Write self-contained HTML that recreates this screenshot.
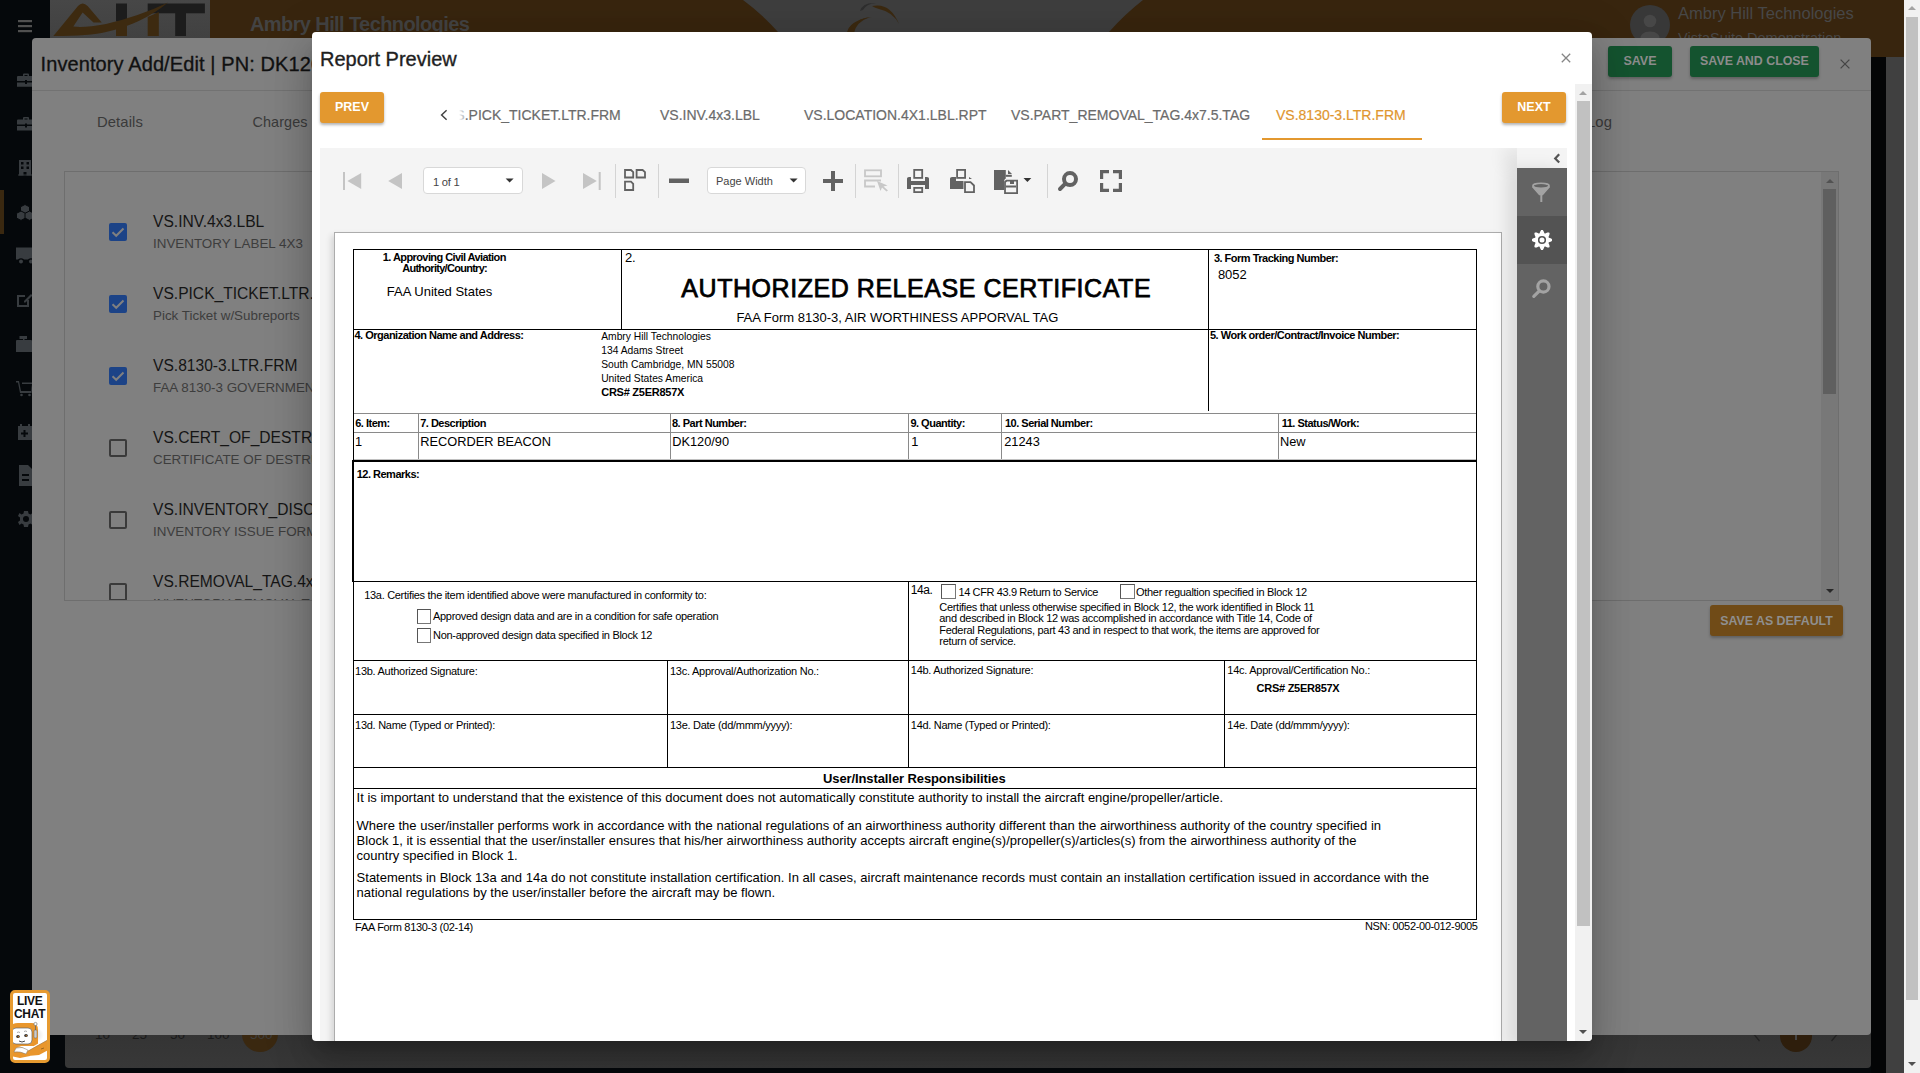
<!DOCTYPE html>
<html><head><meta charset="utf-8">
<style>
*{box-sizing:border-box;margin:0;padding:0}
html,body{width:1920px;height:1073px;overflow:hidden;background:#05080b;font-family:"Liberation Sans",sans-serif;position:relative}
.a{position:absolute}
.t{white-space:nowrap;line-height:1}
</style></head><body>
<!-- ===== PAGE LAYER (double darkened) ===== -->
<div class="a" style="left:50px;top:0;width:1854px;height:57px;background:#38250e"></div>
<!-- center header band -->
<svg class="a" style="left:700px;top:0" width="500" height="57" viewBox="0 0 500 57">
 <path d="M43 0H443Q425 14 409 32V57H78V32Q62 14 43 0Z" fill="#3e3e3e"/>
 <path d="M147 33Q152 20 172 17L165 18Q153 21 150 33Z" fill="#3b2910"/>
 <path d="M147 33Q149 21 170 17Q156 22 154 33Z" fill="#3b2910"/>
 <path d="M172 6Q190 2 199 24Q193 12 179 9Q175 8 172 6Z" fill="#3b2910"/>
 <path d="M160 11Q163 2 176 3Q166 4 163 10Z" fill="#2e2e2e"/>
</svg>
<!-- logo -->
<div class="a" style="left:50px;top:0;width:160px;height:37.5px;background:linear-gradient(#474747,#414141)"></div>
<svg class="a" style="left:50px;top:0" width="160" height="38" viewBox="0 0 160 38">
 <g fill="#1c1c1c">
  <rect x="66" y="3.5" width="11" height="18"/>
  <rect x="97.7" y="3.5" width="57.2" height="9.8"/>
  <rect x="125.2" y="13" width="10.8" height="23"/>
 </g>
 <g fill="#3d2a10">
  <path d="M3.4 36L28 6Q32.6 1 37.6 6L51.7 22.6H43.5L32.6 12.5L23.3 26.6Q35 28 56 24Q90 16 118 2.5Q92 24 56 32Q40 36 3.4 36Z"/>
  <rect x="66" y="26" width="11" height="10"/>
  <path d="M97.7 17L108.8 12V36H97.7Z"/>
 </g>
</svg>
<div class="a t" style="left:250px;top:14px;font-size:20px;font-weight:bold;letter-spacing:-.6px;color:#434343">Ambry Hill Technologies</div>
<!-- right header -->
<div class="a" style="left:1630px;top:5px;width:40px;height:40px;border-radius:50%;background:#383838"></div>
<svg class="a" style="left:1630px;top:5px" width="40" height="40" viewBox="0 0 40 40"><circle cx="20" cy="16" r="6.3" fill="#474747"/><path d="M10 35Q10 26.5 20 26.5Q30 26.5 30 35Z" fill="#474747"/></svg>
<div class="a t" style="left:1678px;top:4.5px;font-size:16.5px;color:#474747">Ambry Hill Technologies</div>
<div class="a t" style="left:1678px;top:31px;font-size:14.5px;color:#474747">VistaSuite Demonstration</div>
<!-- sidebar -->
<div class="a" style="left:0;top:190px;width:4px;height:44px;background:#3a2810"></div>
<svg class="a" style="left:0;top:0" width="50" height="540" viewBox="0 0 50 540">
 <g fill="#505050"><rect x="18" y="20" width="14" height="2.2"/><rect x="18" y="25" width="14" height="2.2"/><rect x="18" y="30" width="14" height="2.2"/></g>
 <g fill="#383c40">
  <path d="M17 77Q17 76 18 76H23V74.5Q23 73.5 24 73.5H28Q29 73.5 29 74.5V76H32V81H27V80H25V81H17ZM24.5 76H27.5V75H24.5ZM17 82.5H25V84H27V82.5H32V86.7H17Z"/>
  <path d="M17 120.5Q17 119.5 18 119.5H23V118Q23 117 24 117H28Q29 117 29 118V119.5H32V124.5H27V123.5H25V124.5H17ZM24.5 119.5H27.5V118.5H24.5ZM17 126H25V127.5H27V126H32V130.4H17Z"/>
  <path d="M19 160H31V175.5H26.5V172H23.5V175.5H19ZM21 162V164.5H23.5V162ZM26.5 162V164.5H29V162ZM21 166.5V169H23.5V166.5ZM26.5 166.5V169H29V166.5Z"/>
  <rect x="18" y="174.5" width="14" height="1"/>
  <g stroke="#05080b" stroke-width="1">
  <path d="M25 204.5L29.5 206.8V211.6L25 213.9L20.5 211.6V206.8Z"/>
  <path d="M21 211L25.5 213.3V218.1L21 220.4L16.5 218.1V213.3Z"/>
  <path d="M29.5 211L34 213.3V218.1L29.5 220.4L25 218.1V213.3Z"/>
  </g>
  <path d="M16 247.5H32V259.5H16Z"/>
  <circle cx="21" cy="261.5" r="2.6" stroke="#05080b" stroke-width="1.2"/><circle cx="31" cy="261.5" r="2.6" stroke="#05080b" stroke-width="1.2"/>
  <path d="M17 295H25V297H19V305H27V300H29V307H17Z"/><path d="M24 301L31 294L32.5 295.5L25.5 302.5H24Z"/>
  <path d="M19.5 336H27V339H24.5V340H31Q32 340 32 341V352H16V341Q16 340 17 340H23V339H19.5Z"/>
  <path d="M16 381H19L21 391H31L32 384H22V382.5H32.5L31.5 393H20L18 382.5H16Z"/><circle cx="21.5" cy="395" r="1.3"/><circle cx="29.5" cy="395" r="1.3"/>
  <path d="M18 426H20V424H22V426H28V424H30V426H32V440H18ZM23.5 430V432.5H21V434.5H23.5V437H25.5V434.5H28V432.5H25.5V430Z"/>
  <path d="M19 465H28L32 469V486H19ZM22 474V476H29V474ZM22 479V481H29V479Z"/>
  <path d="M24 511H28L28.5 513.5L30.5 514.5L32.5 513L34 516L32 517.5V520.5L34 522L32.5 525L30.5 523.5L28.5 524.5L28 527H24L23.5 524.5L21.5 523.5L19.5 525L18 522L20 520.5V517.5L18 516L19.5 513L21.5 514.5L23.5 513.5ZM26 516A3 3 0 1 0 26 522A3 3 0 1 0 26 516Z"/>
 </g>
</svg>
<div class="a" style="left:1871px;top:57px;width:15px;height:1016px;background:#040506"></div>
<div class="a" style="left:1886px;top:57px;width:18px;height:1016px;background:#404040"></div>
<!-- page scrollbar -->
<div class="a" style="left:1904px;top:0;width:16px;height:1073px;background:#f1f1f1"></div>
<div class="a" style="left:1906px;top:17px;width:12px;height:983px;background:#c1c1c1"></div>
<svg class="a" style="left:1907px;top:4px" width="10" height="8"><path d="M1 6L5 2L9 6Z" fill="#a3a3a3"/></svg>
<svg class="a" style="left:1907px;top:1060px" width="10" height="8"><path d="M1 2L5 6L9 2Z" fill="#505050"/></svg>
<!-- pagination card -->
<div class="a" style="left:65px;top:1000px;width:1806px;height:68px;background:linear-gradient(#303030,#383838);border-radius:4px"></div>
<div class="a t" style="left:95px;top:1028px;font-size:13.5px;color:#1a1a1a;word-spacing:0">10</div>
<div class="a t" style="left:132px;top:1028px;font-size:13.5px;color:#1a1a1a">25</div>
<div class="a t" style="left:170px;top:1028px;font-size:13.5px;color:#1a1a1a">50</div>
<div class="a t" style="left:207px;top:1028px;font-size:13.5px;color:#1a1a1a">100</div>
<div class="a" style="left:242px;top:1016px;width:36px;height:36px;border-radius:50%;background:#3a2810"></div>
<div class="a t" style="left:250px;top:1028px;font-size:13.5px;color:#3d3d3d">500</div>
<div class="a" style="left:1780px;top:1019.7px;width:32px;height:32px;border-radius:50%;background:#2e1e0c"></div>
<div class="a" style="left:1795px;top:1030px;width:1.6px;height:10px;background:#444"></div>
<svg class="a" style="left:1750px;top:1025px" width="90" height="20"><path d="M9.5 4L4.5 10L9.5 16M81.5 4L86.5 10L81.5 16" fill="none" stroke="#222" stroke-width="1.3"/></svg>

<!-- ===== INVENTORY DIALOG (single darkened) ===== -->
<div class="a" style="left:32px;top:38px;width:1839px;height:997px;background:#808080;border-radius:4px"></div>
<div class="a t" style="left:40.5px;top:54px;font-size:20px;letter-spacing:.1px;color:#111;-webkit-text-stroke:.3px #111">Inventory Add/Edit | PN: DK120/90</div>
<div class="a" style="left:1608px;top:46px;width:64px;height:31px;background:#14532f;border-radius:3px;box-shadow:0 2px 3px rgba(0,0,0,.25)"></div>
<div class="a t" style="left:1608px;top:55px;width:64px;text-align:center;font-size:12.5px;font-weight:bold;color:#8c8c8c">SAVE</div>
<div class="a" style="left:1690px;top:46px;width:129px;height:31px;background:#14532f;border-radius:3px;box-shadow:0 2px 3px rgba(0,0,0,.25)"></div>
<div class="a t" style="left:1690px;top:55px;width:129px;text-align:center;font-size:12.4px;font-weight:bold;color:#8c8c8c">SAVE AND CLOSE</div>
<svg class="a" style="left:1838px;top:57px" width="14" height="14"><path d="M2.6 2.6L11.4 11.4M11.4 2.6L2.6 11.4" stroke="#454545" stroke-width="1.3"/></svg>
<div class="a" style="left:32px;top:90px;width:1839px;height:1px;background:#727272"></div>
<div class="a t" style="left:97px;top:115px;font-size:14.8px;color:#3a3a3a;letter-spacing:.1px">Details</div>
<div class="a t" style="left:252.5px;top:115px;font-size:14.4px;color:#3a3a3a;letter-spacing:.1px">Charges</div>
<div class="a t" style="left:1587px;top:115px;font-size:14.8px;color:#3a3a3a;letter-spacing:.1px">Log</div>
<div class="a" style="left:64px;top:171px;width:1775px;height:430px;border:1px solid #6e6e6e;overflow:hidden">
 <div class="a" style="left:44px;top:51px;width:18px;height:18px;background:#1c4387;border-radius:2px"></div>
<svg class="a" style="left:44px;top:51px" width="18" height="18"><path d="M3.5 9.3L7.2 12.8L14.5 5.5" fill="none" stroke="#808080" stroke-width="2"/></svg>
<div class="a t" style="left:88px;top:41.5px;font-size:15.6px;color:#151515">VS.INV.4x3.LBL</div>
<div class="a t" style="left:88px;top:64.5px;font-size:13.4px;color:#3d3d3d">INVENTORY LABEL 4X3</div>
<div class="a" style="left:44px;top:123px;width:18px;height:18px;background:#1c4387;border-radius:2px"></div>
<svg class="a" style="left:44px;top:123px" width="18" height="18"><path d="M3.5 9.3L7.2 12.8L14.5 5.5" fill="none" stroke="#808080" stroke-width="2"/></svg>
<div class="a t" style="left:88px;top:113.5px;font-size:15.6px;color:#151515">VS.PICK_TICKET.LTR.FRM</div>
<div class="a t" style="left:88px;top:136.5px;font-size:13.4px;color:#3d3d3d">Pick Ticket w/Subreports</div>
<div class="a" style="left:44px;top:195px;width:18px;height:18px;background:#1c4387;border-radius:2px"></div>
<svg class="a" style="left:44px;top:195px" width="18" height="18"><path d="M3.5 9.3L7.2 12.8L14.5 5.5" fill="none" stroke="#808080" stroke-width="2"/></svg>
<div class="a t" style="left:88px;top:185.5px;font-size:15.6px;color:#151515">VS.8130-3.LTR.FRM</div>
<div class="a t" style="left:88px;top:208.5px;font-size:13.4px;color:#3d3d3d">FAA 8130-3 GOVERNMENT FORM</div>
<div class="a" style="left:44px;top:267px;width:18px;height:18px;border:2px solid #3a3a3a;border-radius:2px"></div>
<div class="a t" style="left:88px;top:257.5px;font-size:15.6px;color:#151515">VS.CERT_OF_DESTRUCTION.LTR.FRM</div>
<div class="a t" style="left:88px;top:280.5px;font-size:13.4px;color:#3d3d3d">CERTIFICATE OF DESTRUCTION</div>
<div class="a" style="left:44px;top:339px;width:18px;height:18px;border:2px solid #3a3a3a;border-radius:2px"></div>
<div class="a t" style="left:88px;top:329.5px;font-size:15.6px;color:#151515">VS.INVENTORY_DISCREPANCY.LTR.FRM</div>
<div class="a t" style="left:88px;top:352.5px;font-size:13.4px;color:#3d3d3d">INVENTORY ISSUE FORM</div>
<div class="a" style="left:44px;top:411px;width:18px;height:18px;border:2px solid #3a3a3a;border-radius:2px"></div>
<div class="a t" style="left:88px;top:401.5px;font-size:15.6px;color:#151515">VS.REMOVAL_TAG.4x7.5.TAG</div>
<div class="a t" style="left:88px;top:424.5px;font-size:13.4px;color:#3d3d3d">INVENTORY REMOVAL TAG</div>
<div class="a" style="left:1756px;top:0;width:17px;height:428px;background:#787878"></div>
<div class="a" style="left:1758px;top:17px;width:13px;height:205px;background:#5f5f5f"></div>
<svg class="a" style="left:1760px;top:5px" width="10" height="8"><path d="M1 6L5 2L9 6Z" fill="#525252"/></svg>
<svg class="a" style="left:1760px;top:415px" width="10" height="8"><path d="M1 2L5 6L9 2Z" fill="#282828"/></svg>
</div>
<div class="a" style="left:1710px;top:605px;width:133px;height:31px;background:#704b17;border-radius:3px;box-shadow:0 2px 3px rgba(0,0,0,.25)"></div>
<div class="a t" style="left:1710px;top:615px;width:133px;text-align:center;font-size:12.4px;font-weight:bold;color:#8f8f8f">SAVE AS DEFAULT</div>
<!-- live chat -->
<div class="a" style="left:10px;top:990px;width:40px;height:73px;border:3px solid #e69a30;border-radius:5px;background:#fff;overflow:hidden">
 <div class="a t" style="left:4px;top:1.6px;font-size:12px;font-weight:bold;color:#111;letter-spacing:-.3px">LIVE</div>
 <div class="a t" style="left:1px;top:15.3px;font-size:12px;font-weight:bold;color:#111;letter-spacing:-.3px">CHAT</div>
 <svg class="a" style="left:-3px;top:-3px" width="40" height="73" viewBox="0 0 40 73">
  <defs><radialGradient id="sh" cx=".5" cy=".5" r=".5"><stop offset="0" stop-color="#000" stop-opacity=".25"/><stop offset="1" stop-color="#000" stop-opacity="0"/></radialGradient></defs>
  <ellipse cx="16" cy="45" rx="18" ry="10" fill="url(#sh)"/>
  <path d="M0 38Q1 33 8 33H22Q28 33 28 40V56H0Z" fill="#e9962c"/>
  <rect x="2" y="38" width="20" height="16" rx="4" fill="#fff" stroke="#666" stroke-width=".7"/>
  <ellipse cx="8" cy="46.5" rx="1.8" ry="1.5" fill="#333"/><ellipse cx="16" cy="45.5" rx="1.8" ry="1.5" fill="#333"/>
  <circle cx="8.3" cy="46.8" r=".7" fill="#c77a2a"/><circle cx="16.3" cy="45.8" r=".7" fill="#c77a2a"/>
  <path d="M7 42.5Q8.5 41.5 10 42.5M14 41.5Q15.5 40.5 17 41.5" stroke="#555" stroke-width=".5" fill="none"/>
  <path d="M9 51Q12 53 15 51" stroke="#333" stroke-width=".9" fill="none"/>
  <rect x="24" y="40" width="3" height="8" rx="1" fill="#ccc" stroke="#666" stroke-width=".5"/>
  <path d="M25.5 40V35" stroke="#666" stroke-width=".8"/><circle cx="25.5" cy="34" r="1.6" fill="#fff" stroke="#666" stroke-width=".6"/>
  <path d="M0 57Q6 54 14 58L20 62V66L10 68L0 66Z" fill="#e9962c"/>
  <path d="M6 58Q12 56 18 60L16 64Q10 61 4 62Z" fill="#fff" stroke="#777" stroke-width=".5"/>
  <path d="M18 60L40 48V59L29 65L18 66Z" fill="#e9962c"/>
  <path d="M18 60L40 47.5" stroke="#fff" stroke-width="1.4"/>
  <path d="M18 60L40 47.5" stroke="#777" stroke-width=".4" transform="translate(0,1.2)"/>
  <path d="M31 59l3 -1" stroke="#8a5a1a" stroke-width=".8"/>
 </svg>
</div>

<!-- ===== REPORT PREVIEW MODAL ===== -->

<div class="a" style="left:312px;top:32px;width:1280px;height:1009px;background:#fff;border-radius:4px;box-shadow:0 11px 15px -7px rgba(0,0,0,.2),0 24px 38px 3px rgba(0,0,0,.14),0 9px 46px 8px rgba(0,0,0,.12);overflow:hidden">
 <div class="a" style="left:8px;top:15.6px;font-size:20px;color:#1f1f1f;-webkit-text-stroke:.35px #1f1f1f;white-space:nowrap">Report Preview</div>
 <svg class="a" style="left:1249px;top:21px" width="10" height="10" viewBox="0 0 10 10"><path d="M.8 .8L9.2 9.2M9.2 .8L.8 9.2" stroke="#858585" stroke-width="1.3"/></svg>
 <!-- PREV / NEXT -->
 <div class="a" style="left:8px;top:60px;width:64px;height:31px;background:#e3982f;border-radius:3px;box-shadow:0 2px 3px rgba(0,0,0,.3);color:#fff;font-weight:bold;font-size:12.5px;text-align:center;line-height:31px">PREV</div>
 <div class="a" style="left:1190px;top:60px;width:64px;height:31px;background:#e3982f;border-radius:3px;box-shadow:0 2px 3px rgba(0,0,0,.3);color:#fff;font-weight:bold;font-size:12.5px;text-align:center;line-height:31px">NEXT</div>
 <!-- tabs -->
 <svg class="a" style="left:127px;top:77px" width="10" height="12" viewBox="0 0 10 12"><path d="M7.6 1.2L2.6 6l5 4.8" fill="none" stroke="#444" stroke-width="1.5"/></svg>
 <div class="a" style="left:134px;top:75px;font-size:14px;color:#6b6b6b;white-space:nowrap;-webkit-text-stroke:.2px #6b6b6b;clip-path:inset(0 0 0 9px)">VS.PICK_TICKET.LTR.FRM</div>
 <div class="a" style="left:143px;top:70px;width:10px;height:24px;background:linear-gradient(to right,#fff 40%,rgba(255,255,255,.4))"></div>
 <div class="a" style="left:348px;top:75px;font-size:14px;color:#6b6b6b;white-space:nowrap;-webkit-text-stroke:.2px #6b6b6b">VS.INV.4x3.LBL</div>
 <div class="a" style="left:492px;top:75px;font-size:14px;color:#6b6b6b;white-space:nowrap;-webkit-text-stroke:.2px #6b6b6b">VS.LOCATION.4X1.LBL.RPT</div>
 <div class="a" style="left:699px;top:75px;font-size:14px;color:#6b6b6b;white-space:nowrap;-webkit-text-stroke:.2px #6b6b6b">VS.PART_REMOVAL_TAG.4x7.5.TAG</div>
 <div class="a" style="left:964px;top:75px;font-size:14px;color:#e0962f;white-space:nowrap;-webkit-text-stroke:.2px #e0962f">VS.8130-3.LTR.FRM</div>
 <div class="a" style="left:950px;top:106px;width:160px;height:2px;background:#e3982f"></div>
 <!-- modal scrollbar -->
 <div class="a" style="left:1263px;top:52px;width:17px;height:957px;background:#f1f1f1"></div>
 <div class="a" style="left:1265px;top:69px;width:13px;height:825px;background:#c1c1c1"></div>
 <svg class="a" style="left:1266px;top:57px" width="10" height="8"><path d="M1 6L5 2L9 6Z" fill="#a3a3a3"/></svg>
 <svg class="a" style="left:1266px;top:996px" width="10" height="8"><path d="M1 2L5 6L9 2Z" fill="#505050"/></svg>
 <!-- viewer -->
 <div class="a" style="left:8px;top:116px;width:1247px;height:893px;background:#f4f4f4;overflow:hidden">
  <svg class="a" style="left:0;top:0" width="830" height="84" viewBox="0 0 830 84">
   <g fill="#c4c4c4">
    <rect x="23" y="24" width="2" height="18"/><path d="M27.4 33L41.2 25V41Z"/>
    <path d="M68.2 33L82 25V41Z"/>
    <path d="M222 25V41L235.5 33Z"/>
    <path d="M263 25V41L276.8 33Z"/><rect x="278.7" y="24" width="2" height="18"/>
   </g>
   <g fill="#d4d4d4"><rect x="295" y="16" width="1" height="34"/><rect x="338" y="16" width="1" height="34"/><rect x="535" y="16" width="1" height="34"/><rect x="578" y="16" width="1" height="34"/><rect x="727" y="16" width="1" height="34"/></g>
   <g fill="none" stroke="#626262" stroke-width="1.8">
    <path d="M305 22H311L313.2 24.2V29.5H305Z"/>
    <path d="M316.6 22H322.6L325 24.2V29.5H316.6Z"/>
    <path d="M305 33.6H311L313.2 35.8V42H305Z"/>
   </g>
   <g fill="#626262">
    <rect x="349" y="30.5" width="20" height="4.5"/>
    <rect x="503" y="31" width="20" height="4"/><rect x="511" y="23" width="4" height="20"/>
   </g>
   <g fill="none" stroke="#c8c8c8" stroke-width="1.8"><rect x="545" y="22.3" width="16" height="6"/><path d="M561 32.5H545V38.5H555"/></g>
   <path d="M557 33L567.5 37.5L563.5 38.5L568 42.5L566.5 43.5L562 39.5L560.5 43Z" fill="#c8c8c8"/>
   <g fill="#626262">
    <path d="M587 30.5Q587 28.9 589 28.9H591V32.9H605V28.9H607Q609 28.9 609 30.5V40.9H605V36.9H591V40.9H587Z"/>
   </g>
   <g fill="none" stroke="#626262" stroke-width="1.8">
    <rect x="594.2" y="21.9" width="8" height="8"/>
    <rect x="594.2" y="39.9" width="8" height="4.2"/>
    <rect x="637.1" y="21.9" width="8" height="8"/>
    <path d="M645 34.1H650.5L654 37.5V44.1H645Z"/>
    <path d="M1 1"/>
   </g>
   <path d="M630 30.5Q630 28.9 632 28.9H636V32.9H643.5V40.9H630Z" fill="#626262"/>
   <path d="M649 29L652 31H649Z" fill="#626262"/>
   <path d="M674 22H685.8V30.5Q684 31 684 34V42H674Z" fill="#626262"/>
   <path d="M688 22L692 26H688Z" fill="#626262"/>
   <rect x="685.8" y="26.8" width="6" height="2" fill="#626262"/>
   <g fill="none" stroke="#626262" stroke-width="1.8"><path d="M685 45.1V34L686.5 32.7H697.1V45.1Z"/><path d="M686 38.5H696"/></g>
   <rect x="690" y="32" width="4" height="4" fill="#626262"/>
   <path d="M703.5 30H711.3L707.4 34.1Z" fill="#333"/>
   <g fill="none" stroke="#626262"><circle cx="750" cy="31.1" r="6" stroke-width="4"/><path d="M744.8 36.2L740 41" stroke-width="4" stroke-linecap="round"/></g>
   <g fill="none" stroke="#626262" stroke-width="3.2"><path d="M781.6 31V23.6H789M793 23.6H800.4V31M800.4 35V42.4H793M789 42.4H781.6V35"/></g>
  </svg>
  <div class="a" style="left:103px;top:19px;width:100px;height:27px;background:#fff;border:1px solid #d8d8d8;border-radius:4px"></div>
  <div class="a" style="left:113px;top:27.5px;font-size:11.2px;color:#444;letter-spacing:-.25px;white-space:nowrap">1 of 1</div>
  <svg class="a" style="left:185px;top:30px" width="9" height="5"><path d="M0.6 0.5H8.6L4.6 4.6Z" fill="#333"/></svg>
  <div class="a" style="left:386.5px;top:19px;width:99px;height:27px;background:#fff;border:1px solid #d8d8d8;border-radius:4px"></div>
  <div class="a" style="left:396px;top:27px;font-size:11px;color:#444;white-space:nowrap">Page Width</div>
  <svg class="a" style="left:469px;top:30px" width="9" height="5"><path d="M0.6 0.6H8.6L4.6 4.6Z" fill="#333"/></svg>

  <!-- page -->
  <div class="a" style="left:14px;top:84px;width:1168px;height:900px;background:#fff;border:1px solid #acacac;box-shadow:-3px 3px 6px rgba(0,0,0,.12)">
   <div id="form"></div>
  </div>
  <!-- right panel -->
  <div class="a" style="left:1197px;top:0;width:50px;height:20px;background:#f4f4f4;box-shadow:-14px 0 16px rgba(0,0,0,.07)"></div>
  <svg class="a" style="left:1232px;top:5px" width="10" height="11"><path d="M7.2 1.2L3.2 5.4L7.2 9.6" fill="none" stroke="#555" stroke-width="2.2"/></svg>
  <div class="a" style="left:1197px;top:20px;width:50px;height:880px;background:#636363;box-shadow:-10px 0 16px rgba(0,0,0,.1)"></div>
  <div class="a" style="left:1197px;top:68px;width:50px;height:48px;background:#535353"></div>
  <svg class="a" style="left:1197px;top:20px" width="50" height="150" viewBox="0 0 50 150">
   <g fill="none" stroke="#a3a3a3">
    <ellipse cx="24" cy="17.8" rx="8" ry="2.4" stroke-width="1.8"/>
    <path d="M15.5 18.5L22.5 26.5H25.5L32.5 18.5" stroke-width="1.6" fill="#a3a3a3"/>
   </g>
   <ellipse cx="24" cy="17.8" rx="7" ry="1.6" fill="#636363"/>
   <rect x="23.3" y="25" width="2" height="9" fill="#a3a3a3"/>
   <g fill="#a3a3a3" stroke="none"></g>
   <g fill="none" stroke="#a3a3a3"><circle cx="26.4" cy="118.5" r="5.6" stroke-width="3.2"/><path d="M22.4 122.8L16.8 128.4" stroke-width="3.2" stroke-linecap="round"/></g>
  </svg>
  <svg class="a" style="left:1212px;top:82px" width="20" height="20" viewBox="-10 -10 20 20"><path d="M0.00 -10.30L0.40 -10.21L0.78 -9.96L1.13 -9.57L1.44 -9.08L1.70 -8.53L1.92 -7.98L2.11 -7.47L2.29 -7.04L2.48 -6.73L2.72 -6.56L3.01 -6.52L3.36 -6.60L3.79 -6.77L4.29 -7.00L4.83 -7.23L5.40 -7.44L5.97 -7.57L6.49 -7.60L6.94 -7.51L7.28 -7.28L7.51 -6.94L7.60 -6.49L7.57 -5.97L7.44 -5.40L7.23 -4.83L7.00 -4.29L6.77 -3.79L6.60 -3.36L6.52 -3.01L6.56 -2.72L6.73 -2.48L7.04 -2.29L7.47 -2.11L7.98 -1.92L8.53 -1.70L9.08 -1.44L9.57 -1.13L9.96 -0.78L10.21 -0.40L10.30 -0.00L10.21 0.40L9.96 0.78L9.57 1.13L9.08 1.44L8.53 1.70L7.98 1.92L7.47 2.11L7.04 2.29L6.73 2.48L6.56 2.72L6.52 3.01L6.60 3.36L6.77 3.79L7.00 4.29L7.23 4.83L7.44 5.40L7.57 5.97L7.60 6.49L7.51 6.94L7.28 7.28L6.94 7.51L6.49 7.60L5.97 7.57L5.40 7.44L4.83 7.23L4.29 7.00L3.79 6.77L3.36 6.60L3.01 6.52L2.72 6.56L2.48 6.73L2.29 7.04L2.11 7.47L1.92 7.98L1.70 8.53L1.44 9.08L1.13 9.57L0.78 9.96L0.40 10.21L0.00 10.30L-0.40 10.21L-0.78 9.96L-1.13 9.57L-1.44 9.08L-1.70 8.53L-1.92 7.98L-2.11 7.47L-2.29 7.04L-2.48 6.73L-2.72 6.56L-3.01 6.52L-3.36 6.60L-3.79 6.77L-4.29 7.00L-4.83 7.23L-5.40 7.44L-5.97 7.57L-6.49 7.60L-6.94 7.51L-7.28 7.28L-7.51 6.94L-7.60 6.49L-7.57 5.97L-7.44 5.40L-7.23 4.83L-7.00 4.29L-6.77 3.79L-6.60 3.36L-6.52 3.01L-6.56 2.72L-6.73 2.48L-7.04 2.29L-7.47 2.11L-7.98 1.92L-8.53 1.70L-9.08 1.44L-9.57 1.13L-9.96 0.78L-10.21 0.40L-10.30 0.00L-10.21 -0.40L-9.96 -0.78L-9.57 -1.13L-9.08 -1.44L-8.53 -1.70L-7.98 -1.92L-7.47 -2.11L-7.04 -2.29L-6.73 -2.48L-6.56 -2.72L-6.52 -3.01L-6.60 -3.36L-6.77 -3.79L-7.00 -4.29L-7.23 -4.83L-7.44 -5.40L-7.57 -5.97L-7.60 -6.49L-7.51 -6.94L-7.28 -7.28L-6.94 -7.51L-6.49 -7.60L-5.97 -7.57L-5.40 -7.44L-4.83 -7.23L-4.29 -7.00L-3.79 -6.77L-3.36 -6.60L-3.01 -6.52L-2.72 -6.56L-2.48 -6.73L-2.29 -7.04L-2.11 -7.47L-1.92 -7.98L-1.70 -8.53L-1.44 -9.08L-1.13 -9.57L-0.78 -9.96L-0.40 -10.21Z" fill="#fff"/><circle r="3.3" fill="none" stroke="#535353" stroke-width="1.6"/></svg>
 </div>
</div>
<!--FORM_START-->
<div class="a" style="left:353px;top:249px;width:1124px;height:1px;background:#000"></div>
<div class="a" style="left:353px;top:249px;width:1px;height:212px;background:#000"></div>
<div class="a" style="left:1476px;top:249px;width:1px;height:671px;background:#000"></div>
<div class="a" style="left:621px;top:249px;width:1px;height:80px;background:#000"></div>
<div class="a" style="left:1208px;top:249px;width:1px;height:162px;background:#000"></div>
<div class="a" style="left:353px;top:329px;width:1124px;height:1px;background:#000"></div>
<div class="a" style="left:354px;top:413px;width:1122px;height:1px;background:#8a8a8a"></div>
<div class="a" style="left:354px;top:432px;width:1122px;height:1px;background:#8a8a8a"></div>
<div class="a" style="left:418px;top:413px;width:1px;height:47px;background:#8a8a8a"></div>
<div class="a" style="left:670px;top:413px;width:1px;height:47px;background:#8a8a8a"></div>
<div class="a" style="left:908px;top:413px;width:1px;height:47px;background:#8a8a8a"></div>
<div class="a" style="left:1001px;top:413px;width:1px;height:47px;background:#8a8a8a"></div>
<div class="a" style="left:1278px;top:413px;width:1px;height:47px;background:#8a8a8a"></div>
<div class="a" style="left:354px;top:459px;width:1122px;height:1px;background:#c0c0c0"></div>
<div class="a" style="left:352px;top:460px;width:1125px;height:2px;background:#000"></div>
<div class="a" style="left:352px;top:460px;width:2px;height:122px;background:#000"></div>
<div class="a" style="left:352px;top:581px;width:1125px;height:1px;background:#000"></div>
<div class="a" style="left:353px;top:581px;width:1px;height:339px;background:#000"></div>
<div class="a" style="left:908px;top:581px;width:1px;height:186px;background:#000"></div>
<div class="a" style="left:353px;top:660px;width:1124px;height:1px;background:#000"></div>
<div class="a" style="left:667px;top:660px;width:1px;height:107px;background:#000"></div>
<div class="a" style="left:1224px;top:660px;width:1px;height:107px;background:#000"></div>
<div class="a" style="left:353px;top:714px;width:1124px;height:1px;background:#000"></div>
<div class="a" style="left:353px;top:767px;width:1124px;height:1px;background:#000"></div>
<div class="a" style="left:353px;top:788px;width:1124px;height:1px;background:#000"></div>
<div class="a" style="left:353px;top:919px;width:1124px;height:1px;background:#000"></div>
<div class="a t" style="left:382.8px;top:251.69px;font-size:11px;font-weight:bold;letter-spacing:-0.58px;color:#000;">1. Approving Civil Aviation</div>
<div class="a t" style="left:402.2px;top:262.79px;font-size:11px;font-weight:bold;letter-spacing:-0.72px;color:#000;">Authority/Country:</div>
<div class="a t" style="left:386.8px;top:284.60px;font-size:13px;font-weight:normal;letter-spacing:0px;color:#000;">FAA United States</div>
<div class="a t" style="left:624.9px;top:250.80px;font-size:13px;font-weight:normal;letter-spacing:0px;color:#000;">2.</div>
<div class="a t" style="left:681.3px;top:276.24px;font-size:25px;font-weight:normal;letter-spacing:0.55px;color:#000;-webkit-text-stroke:.75px #000">AUTHORIZED RELEASE CERTIFICATE</div>
<div class="a t" style="left:736.4px;top:310.80px;font-size:13px;font-weight:normal;letter-spacing:0px;color:#000;">FAA Form 8130-3, AIR WORTHINESS APPORVAL TAG</div>
<div class="a t" style="left:1213.9px;top:253.09px;font-size:11px;font-weight:bold;letter-spacing:-0.5px;color:#000;">3. Form Tracking Number:</div>
<div class="a t" style="left:1217.9px;top:267.80px;font-size:13px;font-weight:normal;letter-spacing:0px;color:#000;">8052</div>
<div class="a t" style="left:354.5px;top:329.69px;font-size:11px;font-weight:bold;letter-spacing:-0.5px;color:#000;">4. Organization Name and Address:</div>
<div class="a t" style="left:601.2px;top:332.18px;font-size:10.3px;font-weight:normal;letter-spacing:0px;color:#000;">Ambry Hill Technologies</div>
<div class="a t" style="left:601.2px;top:346.08px;font-size:10.3px;font-weight:normal;letter-spacing:0px;color:#000;">134 Adams Street</div>
<div class="a t" style="left:601.2px;top:360.08px;font-size:10.3px;font-weight:normal;letter-spacing:0px;color:#000;">South Cambridge, MN 55008</div>
<div class="a t" style="left:601.2px;top:374.28px;font-size:10.3px;font-weight:normal;letter-spacing:0px;color:#000;">United States America</div>
<div class="a t" style="left:601.2px;top:387.39px;font-size:11px;font-weight:bold;letter-spacing:-0.25px;color:#000;">CRS# Z5ER857X</div>
<div class="a t" style="left:1210px;top:329.89px;font-size:11px;font-weight:bold;letter-spacing:-0.5px;color:#000;">5. Work order/Contract/Invoice Number:</div>
<div class="a t" style="left:355.2px;top:417.99px;font-size:11px;font-weight:bold;letter-spacing:-0.5px;color:#000;">6. Item:</div>
<div class="a t" style="left:420.2px;top:417.99px;font-size:11px;font-weight:bold;letter-spacing:-0.5px;color:#000;">7. Description</div>
<div class="a t" style="left:672px;top:417.99px;font-size:11px;font-weight:bold;letter-spacing:-0.5px;color:#000;">8. Part Number:</div>
<div class="a t" style="left:910.4px;top:417.99px;font-size:11px;font-weight:bold;letter-spacing:-0.5px;color:#000;">9. Quantity:</div>
<div class="a t" style="left:1005px;top:417.99px;font-size:11px;font-weight:bold;letter-spacing:-0.5px;color:#000;">10. Serial Number:</div>
<div class="a t" style="left:1281.7px;top:417.99px;font-size:11px;font-weight:bold;letter-spacing:-0.5px;color:#000;">11. Status/Work:</div>
<div class="a t" style="left:355px;top:435.96px;font-size:12.8px;font-weight:normal;letter-spacing:0px;color:#000;">1</div>
<div class="a t" style="left:420.2px;top:435.96px;font-size:12.8px;font-weight:normal;letter-spacing:0px;color:#000;">RECORDER BEACON</div>
<div class="a t" style="left:672.2px;top:435.96px;font-size:12.8px;font-weight:normal;letter-spacing:0px;color:#000;">DK120/90</div>
<div class="a t" style="left:911.2px;top:435.96px;font-size:12.8px;font-weight:normal;letter-spacing:0px;color:#000;">1</div>
<div class="a t" style="left:1004.2px;top:435.96px;font-size:12.8px;font-weight:normal;letter-spacing:0px;color:#000;">21243</div>
<div class="a t" style="left:1280px;top:435.96px;font-size:12.8px;font-weight:normal;letter-spacing:0px;color:#000;">New</div>
<div class="a t" style="left:356.7px;top:468.69px;font-size:11px;font-weight:bold;letter-spacing:-0.5px;color:#000;">12. Remarks:</div>
<div class="a t" style="left:364.2px;top:589.69px;font-size:11px;font-weight:normal;letter-spacing:-0.3px;color:#000;">13a. Certifies the item identified above were manufactured in conformity to:</div>
<div class="a" style="left:417px;top:609px;width:14px;height:15px;border:1px solid #777;border-top-color:#555;border-left-color:#555"></div>
<div class="a t" style="left:433px;top:610.69px;font-size:11px;font-weight:normal;letter-spacing:-0.3px;color:#000;">Approved design data and are in a condition for safe operation</div>
<div class="a" style="left:417px;top:628px;width:14px;height:15px;border:1px solid #777;border-top-color:#555;border-left-color:#555"></div>
<div class="a t" style="left:433px;top:630.49px;font-size:11px;font-weight:normal;letter-spacing:-0.3px;color:#000;">Non-approved design data specified in Block 12</div>
<div class="a t" style="left:910.8px;top:584.44px;font-size:12px;font-weight:normal;letter-spacing:-0.4px;color:#000;">14a.</div>
<div class="a" style="left:941px;top:584px;width:15px;height:15px;border:1px solid #777;border-top-color:#555;border-left-color:#555"></div>
<div class="a t" style="left:958.4px;top:586.79px;font-size:11px;font-weight:normal;letter-spacing:-0.37px;color:#000;">14 CFR 43.9 Return to Service</div>
<div class="a" style="left:1120px;top:584px;width:15px;height:15px;border:1px solid #777;border-top-color:#555;border-left-color:#555"></div>
<div class="a t" style="left:1136px;top:586.79px;font-size:11px;font-weight:normal;letter-spacing:-0.3px;color:#000;">Other regualtion specified in Block 12</div>
<div class="a t" style="left:939.3px;top:601.59px;font-size:11px;font-weight:normal;letter-spacing:-0.3px;color:#000;">Certifies that unless otherwise specified in Block 12, the work identified in Block 11</div>
<div class="a t" style="left:939.3px;top:612.89px;font-size:11px;font-weight:normal;letter-spacing:-0.3px;color:#000;">and described in Block 12 was accomplished in accordance with Title 14, Code of</div>
<div class="a t" style="left:939.3px;top:624.69px;font-size:11px;font-weight:normal;letter-spacing:-0.3px;color:#000;">Federal Regulations, part 43 and in respect to that work, the items are approved for</div>
<div class="a t" style="left:939.3px;top:636.29px;font-size:11px;font-weight:normal;letter-spacing:-0.3px;color:#000;">return of service.</div>
<div class="a t" style="left:355.1px;top:665.69px;font-size:11px;font-weight:normal;letter-spacing:-0.28px;color:#000;">13b. Authorized Signature:</div>
<div class="a t" style="left:670px;top:665.69px;font-size:11px;font-weight:normal;letter-spacing:-0.26px;color:#000;">13c. Approval/Authorization No.:</div>
<div class="a t" style="left:910.8px;top:665.19px;font-size:11px;font-weight:normal;letter-spacing:-0.28px;color:#000;">14b. Authorized Signature:</div>
<div class="a t" style="left:1227.3px;top:665.19px;font-size:11px;font-weight:normal;letter-spacing:-0.26px;color:#000;">14c. Approval/Certification No.:</div>
<div class="a t" style="left:1256.5px;top:682.69px;font-size:11px;font-weight:bold;letter-spacing:-0.25px;color:#000;">CRS# Z5ER857X</div>
<div class="a t" style="left:355.1px;top:720.19px;font-size:11px;font-weight:normal;letter-spacing:-0.28px;color:#000;">13d. Name (Typed or Printed):</div>
<div class="a t" style="left:670px;top:720.19px;font-size:11px;font-weight:normal;letter-spacing:-0.28px;color:#000;">13e. Date (dd/mmm/yyyy):</div>
<div class="a t" style="left:910.8px;top:720.19px;font-size:11px;font-weight:normal;letter-spacing:-0.28px;color:#000;">14d. Name (Typed or Printed):</div>
<div class="a t" style="left:1227.3px;top:720.19px;font-size:11px;font-weight:normal;letter-spacing:-0.28px;color:#000;">14e. Date (dd/mmm/yyyy):</div>
<div class="a t" style="left:823px;top:771.60px;font-size:13px;font-weight:bold;letter-spacing:-0.1px;color:#000;">User/Installer Responsibilities</div>
<div class="a t" style="left:356.6px;top:791.30px;font-size:13px;font-weight:normal;letter-spacing:0px;color:#000;">It is important to understand that the existence of this document does not automatically constitute authority to install the aircraft engine/propeller/article.</div>
<div class="a t" style="left:356.6px;top:818.60px;font-size:13px;font-weight:normal;letter-spacing:0px;color:#000;">Where the user/installer performs work in accordance with the national regulations of an airworthiness authority different than the airworthiness authority of the country specified in</div>
<div class="a t" style="left:356.6px;top:833.60px;font-size:13px;font-weight:normal;letter-spacing:0px;color:#000;">Block 1, it is essential that the user/installer ensures that his/her airworthiness authority accepts aircraft engine(s)/propeller(s)/articles(s) from the airworthiness authority of the</div>
<div class="a t" style="left:356.6px;top:848.70px;font-size:13px;font-weight:normal;letter-spacing:0px;color:#000;">country specified in Block 1.</div>
<div class="a t" style="left:356.6px;top:870.60px;font-size:13px;font-weight:normal;letter-spacing:0px;color:#000;">Statements in Block 13a and 14a do not constitute installation certification. In all cases, aircraft maintenance records must contain an installation certification issued in accordance with the</div>
<div class="a t" style="left:356.6px;top:885.60px;font-size:13px;font-weight:normal;letter-spacing:0px;color:#000;">national regulations by the user/installer before the aircraft may be flown.</div>
<div class="a t" style="left:355.1px;top:921.69px;font-size:11px;font-weight:normal;letter-spacing:-0.3px;color:#000;">FAA Form 8130-3 (02-14)</div>
<div class="a t" style="left:1365px;top:921.29px;font-size:11px;font-weight:normal;letter-spacing:-0.35px;color:#000;">NSN: 0052-00-012-9005</div>
<!--FORM_END-->
</body></html>
